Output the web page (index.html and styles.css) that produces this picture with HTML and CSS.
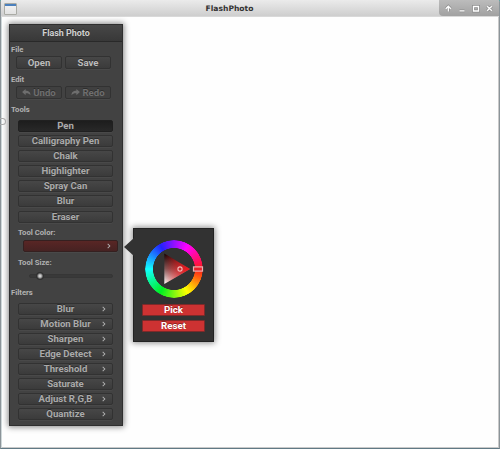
FILE: index.html
```html
<!DOCTYPE html>
<html lang="en">
<head>
<meta charset="utf-8">
<title>FlashPhoto</title>
<link rel="stylesheet" href="styles.css">
</head>
<body>
<div class="window">
  <header class="titlebar">
    <span class="app-icon"></span>
    <span class="window-title">FlashPhoto</span>
    <div class="controls">
      <svg width="60" height="16" viewBox="0 0 60 16" fill="none">
        <g stroke="#8c8c8c" stroke-width="2.800">
          <path d="M9.300 11.500V7M7 8.500l2.300-2.300 2.300 2.300M20.500 10.800h5M34.500 6.500h5v4.500h-5zM48.200 6.200l4.600 4.600M52.800 6.200l-4.600 4.600"/>
        </g>
        <g stroke="#fff" stroke-width="1.300">
          <path d="M9.300 11.500V7M6.800 8.700l2.500-2.500 2.500 2.500M20.500 10.800h5M34.500 6.500h5v4.500h-5zM48.200 6.200l4.600 4.600M52.800 6.200l-4.600 4.600"/>
        </g>
      </svg>
    </div>
  </header>
  <main class="canvas">
    <span class="cursor"></span>
    <section class="panel">
      <h1 class="panel-title">Flash Photo</h1>
      <h2 class="label">File</h2>
      <div class="pair"><button class="btn">Open</button><button class="btn">Save</button></div>
      <h2 class="label edit">Edit</h2>
      <div class="pair">
        <button class="btn disabled"><svg width="9" height="7" viewBox="0 0 10 8"><path fill="currentColor" d="M0 3.500L4 0v2c4 0 5.500 2 5.500 5C8 5.300 6.500 4.900 4 5v2z"/></svg>Undo</button>
        <button class="btn disabled"><svg width="9" height="7" viewBox="0 0 10 8"><path fill="currentColor" d="M10 3.500L6 0v2C2 2 .5 4 .5 7 2 5.300 3.500 4.900 6 5v2z"/></svg>Redo</button>
      </div>
      <h2 class="label tools">Tools</h2>
      <div class="stack">
        <button class="btn active">Pen</button>
        <button class="btn">Calligraphy Pen</button>
        <button class="btn">Chalk</button>
        <button class="btn">Highlighter</button>
        <button class="btn">Spray Can</button>
        <button class="btn">Blur</button>
        <button class="btn">Eraser</button>
      </div>
      <h3 class="label sub">Tool Color:</h3>
      <button class="btn color more"></button>
      <h3 class="label sub size">Tool Size:</h3>
      <div class="slider"><span class="knob"></span></div>
      <h2 class="label filters">Filters</h2>
      <div class="stack">
        <button class="btn more">Blur</button>
        <button class="btn more">Motion Blur</button>
        <button class="btn more">Sharpen</button>
        <button class="btn more">Edge Detect</button>
        <button class="btn more">Threshold</button>
        <button class="btn more">Saturate</button>
        <button class="btn more">Adjust R,G,B</button>
        <button class="btn more">Quantize</button>
      </div>
    </section>
    <aside class="popup">
      <div class="wheel">
        <div class="ring"></div>
        <svg class="wheel-overlay" width="60" height="58" viewBox="0 0 60 58">
          <defs>
            <linearGradient id="hue" x1="0" y1="0" x2="1" y2="0"><stop stop-color="#f00" stop-opacity="0"/><stop offset="1" stop-color="#f5141c"/></linearGradient>
            <linearGradient id="shade" x1="0" y1="0" x2="0" y2="1"><stop stop-color="#100000"/><stop offset=".5" stop-color="#805858"/><stop offset="1" stop-color="#fff"/></linearGradient>
          </defs>
          <path fill="url(#shade)" d="M20.300 13.500L46 29 20.300 44z"/>
          <path fill="url(#hue)" d="M20.300 13.500L46 29 20.300 44z"/>
          <circle cx="36" cy="29" r="2.100" fill="none" stroke="#f2bcbc" stroke-width="1.100"/>
          <rect x="49.500" y="26.900" width="9" height="4.200" fill="#e8202b" stroke="#e6b0b0" stroke-width="1.200"/>
        </svg>
      </div>
      <button class="red">Pick</button>
      <button class="red">Reset</button>
    </aside>
  </main>
</div>
</body>
</html>
```
FILE: styles.css
```css
* { box-sizing: border-box; }
html, body { height: 100%; }
body {
  margin: 0;
  overflow: hidden;
  background: #3aa9a4;
  font-family: Roboto, "Liberation Sans", sans-serif;
}
button { font: inherit; margin: 0; padding: 0; }
.window {
  height: 449px;
  display: flex;
  flex-direction: column;
  background: #fefefe;
  border: solid #8b9499;
  border-width: 0 1px 1px;
  border-bottom-color: #607985;
  border-radius: 2px 2px 0 0;
  box-shadow: inset 1px 0 #cfd8da, inset -1px -1px #c9c9c9;
}
.titlebar {
  flex: none;
  height: 17px;
  display: grid;
  grid-template-columns: 60px 1fr 60px;
  background: linear-gradient(#ebebeb, #cecece);
  border-bottom: 1px solid #d9d9d9;
}
.app-icon {
  width: 13px;
  height: 12px;
  margin: 3px 0 0 3px;
  border: 1px solid #aaaba5;
  border-radius: 1px;
  background: linear-gradient(#4b80bd 1.500px, #f0f0f0 2px, #e2e2e2);
}
.window-title {
  text-align: center;
  padding-right: 41px;
  font: bold 7.6px/18px "DejaVu Sans", sans-serif;
  color: #333;
}
.controls {
  height: 16px;
  border-radius: 0 0 0 4px;
  background: linear-gradient(#bcbcbc, #a1a1a1);
}
.controls svg { display: block; }
.canvas { position: relative; flex: 1; }
.cursor {
  position: absolute;
  left: -1px;
  top: 101px;
  width: 6px;
  height: 7px;
  border: 1px solid #aaa;
  border-left: 0;
  border-radius: 0 4px 4px 0;
}
.panel {
  width: 114px;
  height: 402px;
  margin: 7px 0 0 8px;
  background: #424242;
  border: 1px solid #2f2f2f;
  box-shadow: 0 0 6px 1px rgba(0, 0, 0, .48);
}
.panel-title {
  height: 17px;
  margin: 0 0 4px;
  border-bottom: 1px solid #292929;
  background: linear-gradient(#474747, #383838);
  color: #d0d0d0;
  font-size: 8.9px;
  line-height: 16px;
  text-align: center;
  text-shadow: 0 -1px #222;
}
.label {
  height: 8px;
  margin: 0 0 0 1px;
  color: #b2b2b2;
  font-size: 7.7px;
  line-height: 8px;
}
.pair {
  display: grid;
  grid-template-columns: 46px 46px;
  gap: 3px;
  margin: 2px 0 0 6px;
}
.btn {
  height: 13px;
  display: flex;
  align-items: center;
  justify-content: center;
  position: relative;
  border: 1px solid #323232;
  border-radius: 2px;
  background: linear-gradient(#474747, #3b3b3b);
  box-shadow: 0 1px #494949;
  color: #aaa;
  font-size: 9.6px;
  font-weight: bold;
  line-height: 11px;
  text-shadow: 0 -1px #2d2d2d;
}
.pair .btn { color: #bbb; }
.pair .disabled { color: #6e6e6e; gap: 2px; background: #404040; }
.edit { margin-top: 7px; }
.tools { margin-top: 7px; }
.stack {
  display: grid;
  grid-auto-rows: 12px;
  row-gap: 3.1px;
  width: 95px;
  margin: 6px 0 0 8px;
}
.stack .btn { height: 12px; line-height: 10px; }
.stack .active { background: linear-gradient(#1d1d1d, #282828); border-color: #202020; }
.sub { margin: 6px 0 0 8px; }
.color {
  width: 95px;
  margin: 3px 0 0 13px;
  background: linear-gradient(#592625, #462222);
  border-color: #352020;
  height: 12px;
}
.more::after {
  content: "";
  position: absolute;
  right: 7.5px;
  top: 3.2px;
  width: 3px;
  height: 3px;
  border: solid #b5b5b5;
  border-width: 1px 1px 0 0;
  transform: rotate(45deg) scale(.85);
}
.size { margin-top: 7px; }
.slider {
  display: flex;
  align-items: center;
  width: 84px;
  height: 4px;
  margin: 7px 0 0 19px;
  border: 1px solid #363636;
  border-radius: 2px;
  background: #393939;
}
.knob {
  flex: none;
  width: 8px;
  height: 8px;
  margin-left: 6px;
  border-radius: 50%;
  background: radial-gradient(circle, #d0d0d0 1px, #808080 2.2px, #303030 3.2px);
}
.filters { margin-top: 11px; }
.popup {
  position: absolute;
  left: 132px;
  top: 211px;
  width: 81px;
  height: 114px;
  padding: 11px 9px 0;
  background: #323232;
  border: 1px solid #222;
  box-shadow: 0 0 6px 1px rgba(0, 0, 0, .45);
}
.popup::before {
  content: "";
  position: absolute;
  left: -10px;
  top: 9px;
  border: solid transparent;
  border-width: 9px 10px 9px 0;
  border-right-color: #323232;
}
.wheel { position: relative; width: 60px; height: 58px; margin-left: 1px; }
.ring {
  width: 58px;
  height: 58px;
  margin-left: 1px;
  border-radius: 50%;
  background: conic-gradient(from 90deg, #ff1818, #ff0, #0e2, #1ff, #22f, #f0f, #ff1818);
  -webkit-mask: radial-gradient(circle, transparent 20.7px, #000 21.3px 28.6px, transparent 29.2px);
  mask: radial-gradient(circle, transparent 20.7px, #000 21.3px 28.6px, transparent 29.2px);
}
.wheel-overlay { position: absolute; left: 0; top: 0; overflow: visible; }
.red {
  display: block;
  width: 63px;
  height: 12px;
  margin: 6px 0 0 -1px;
  border: 1px solid #7e2929;
  border-radius: 1px;
  background: #cd3232;
  color: #fff;
  font-size: 9.7px;
  font-weight: bold;
  line-height: 10px;
  text-shadow: 0 -1px #8c2020;
}
.red + .red { margin-top: 4px; }
```
